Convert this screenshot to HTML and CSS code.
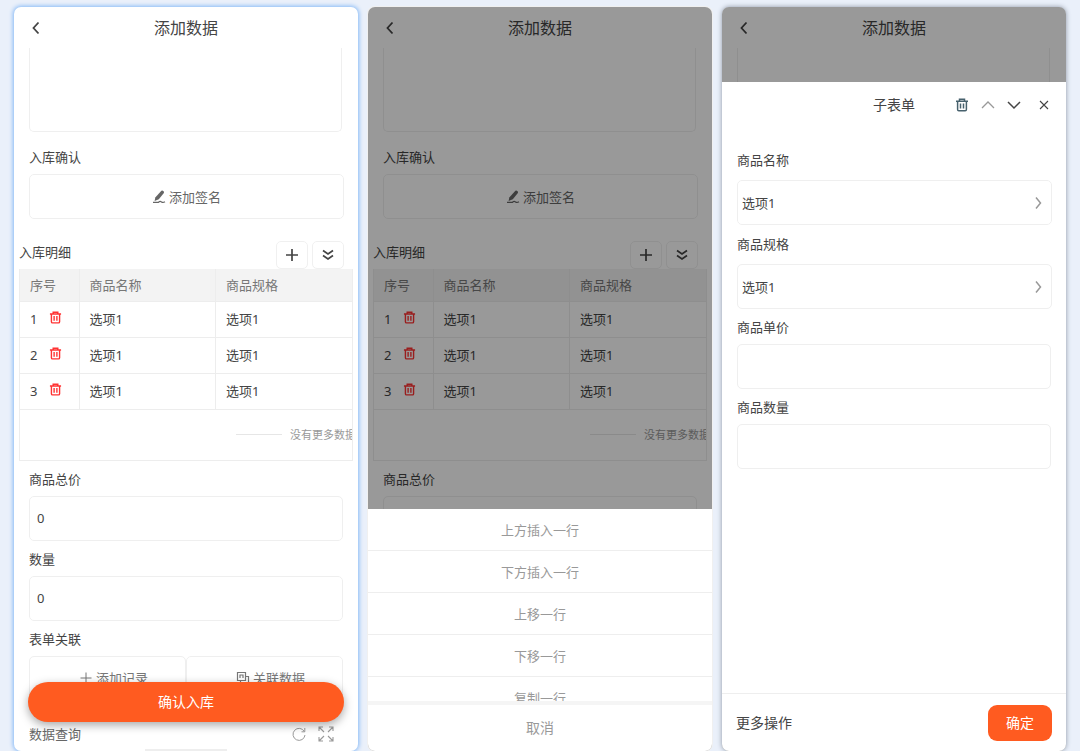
FILE: index.html
```
<!DOCTYPE html>
<html lang="zh-CN">
<head>
<meta charset="utf-8">
<meta name="viewport" content="width=device-width, initial-scale=1">
<title>添加数据</title>
<link rel="stylesheet" href="styles.css">
</head>
<body>
<svg class="sprite" aria-hidden="true">
  <symbol id="back" viewBox="0 0 16 16"><path d="M10.5 2.5 5.5 8l5 5.5" fill="none" stroke="currentColor" stroke-width="1.8"/></symbol>
  <symbol id="pen" viewBox="0 0 14 14"><path d="M9.400.8Q10.400.1 11.400 1t.5 2L6.800 9.200 2.600 10.900 3.300 7.400Z" fill="currentColor"/><path d="M1 12.300h5.500q1.500-1.400 3-.4t3.500-.2" fill="none" stroke="currentColor" stroke-width="1.200"/></symbol>
  <symbol id="plus" viewBox="0 0 14 14"><path d="M7 1v12M1 7h12" fill="none" stroke="currentColor" stroke-width="1.700"/></symbol>
  <symbol id="thin-plus" viewBox="0 0 14 14"><path d="M7 1.500v11M1.500 7h11" fill="none" stroke="currentColor"/></symbol>
  <symbol id="double-down" viewBox="0 0 14 14"><path d="m2 2.500 5 3.500 5-3.500M2 7.500 7 11l5-3.500" fill="none" stroke="currentColor" stroke-width="1.700"/></symbol>
  <symbol id="trash" viewBox="0 0 14 14"><path d="M1 3.200h12M4.500 3V1.300h5V3M2.600 3.500v8q0 1.300 1.200 1.300h6.400q1.200 0 1.200-1.300v-8M5.500 5.500v5M8.500 5.500v5" fill="none" stroke="currentColor" stroke-width="1.500"/></symbol>
  <symbol id="link-data" viewBox="0 0 14 14"><path d="M1.500 1.500h8v8h-8zM4 7V4h3v3M9.500 5.500h3v7M4.500 9.500v2.500H8" fill="none" stroke="currentColor" stroke-width="1.200"/></symbol>
  <symbol id="refresh" viewBox="0 0 14 14"><path d="M12.300 4.500A6 6 0 1 0 13 8M12.800 1v3.800H9.500" fill="none" stroke="currentColor"/></symbol>
  <symbol id="expand" viewBox="0 0 16 16"><path d="M1 5V1h4M1 1l5 5M11 1h4v4M15 1l-5 5M1 11v4h4M1 15l5-5M11 15h4v-4M15 15l-5-5" fill="none" stroke="currentColor" stroke-width="1.100"/></symbol>
  <symbol id="up" viewBox="0 0 14 14"><path d="m1 10 6-6 6 6" fill="none" stroke="currentColor" stroke-width="1.300"/></symbol>
  <symbol id="down" viewBox="0 0 14 14"><path d="m1 4 6 6 6-6" fill="none" stroke="currentColor" stroke-width="1.500"/></symbol>
  <symbol id="close" viewBox="0 0 14 14"><path d="m3 3 8 8M11 3l-8 8" fill="none" stroke="currentColor" stroke-width="1.100"/></symbol>
  <symbol id="right" viewBox="0 0 14 14"><path d="m5 1.500 4.500 5.500L5 12.500" fill="none" stroke="currentColor" stroke-width="1.500"/></symbol>
</svg>

<main class="board">
  <section class="phone phone-active">
    <header class="bar">
      <button class="icon-btn" type="button" aria-label="返回"><svg class="icon-lg"><use href="#back"/></svg></button>
      <h1 class="bar-title">添加数据</h1>
    </header>
    <form class="form">
      <textarea class="note" aria-label="备注"></textarea>
      <h2 class="label label-first">入库确认</h2>
      <button class="sign" type="button"><svg class="icon"><use href="#pen"/></svg>添加签名</button>
      <div class="detail">
        <div class="detail-head">
          <h2 class="detail-title">入库明细</h2>
          <button class="tool" type="button" aria-label="添加"><svg class="icon"><use href="#plus"/></svg></button>
          <button class="tool" type="button" aria-label="展开"><svg class="icon"><use href="#double-down"/></svg></button>
        </div>
        <div class="table-box">
          <table class="table">
            <thead><tr><th class="col-no">序号</th><th>商品名称</th><th>商品规格</th></tr></thead>
            <tbody>
              <tr><td><span class="row-no">1<button class="del" type="button" aria-label="删除"><svg class="icon-sm"><use href="#trash"/></svg></button></span></td><td>选项1</td><td>选项1</td></tr>
              <tr><td><span class="row-no">2<button class="del" type="button" aria-label="删除"><svg class="icon-sm"><use href="#trash"/></svg></button></span></td><td>选项1</td><td>选项1</td></tr>
              <tr><td><span class="row-no">3<button class="del" type="button" aria-label="删除"><svg class="icon-sm"><use href="#trash"/></svg></button></span></td><td>选项1</td><td>选项1</td></tr>
            </tbody>
          </table>
          <p class="no-more">没有更多数据</p>
        </div>
      </div>
      <label class="label" for="total">商品总价</label>
      <input class="field" id="total" type="text" value="0">
      <label class="label" for="count">数量</label>
      <input class="field" id="count" type="text" value="0">
      <h2 class="label">表单关联</h2>
      <div class="pair">
        <button class="relate" type="button"><svg class="icon"><use href="#thin-plus"/></svg>添加记录</button>
        <button class="relate" type="button"><svg class="icon"><use href="#link-data"/></svg>关联数据</button>
      </div>
      <div class="query">
        <h2 class="query-title">数据查询</h2>
        <button class="icon-btn" type="button" aria-label="刷新"><svg class="icon"><use href="#refresh"/></svg></button>
        <button class="icon-btn" type="button" aria-label="全屏"><svg class="icon-lg"><use href="#expand"/></svg></button>
      </div>
      <div class="handle"></div>
    </form>
    <button class="submit" type="button">确认入库</button>
  </section>

  <section class="phone">
    <header class="bar">
      <button class="icon-btn" type="button" aria-label="返回"><svg class="icon-lg"><use href="#back"/></svg></button>
      <h1 class="bar-title">添加数据</h1>
    </header>
    <form class="form">
      <textarea class="note" aria-label="备注"></textarea>
      <h2 class="label label-first">入库确认</h2>
      <button class="sign" type="button"><svg class="icon"><use href="#pen"/></svg>添加签名</button>
      <div class="detail">
        <div class="detail-head">
          <h2 class="detail-title">入库明细</h2>
          <button class="tool" type="button" aria-label="添加"><svg class="icon"><use href="#plus"/></svg></button>
          <button class="tool" type="button" aria-label="展开"><svg class="icon"><use href="#double-down"/></svg></button>
        </div>
        <div class="table-box">
          <table class="table">
            <thead><tr><th class="col-no">序号</th><th>商品名称</th><th>商品规格</th></tr></thead>
            <tbody>
              <tr><td><span class="row-no">1<button class="del" type="button" aria-label="删除"><svg class="icon-sm"><use href="#trash"/></svg></button></span></td><td>选项1</td><td>选项1</td></tr>
              <tr><td><span class="row-no">2<button class="del" type="button" aria-label="删除"><svg class="icon-sm"><use href="#trash"/></svg></button></span></td><td>选项1</td><td>选项1</td></tr>
              <tr><td><span class="row-no">3<button class="del" type="button" aria-label="删除"><svg class="icon-sm"><use href="#trash"/></svg></button></span></td><td>选项1</td><td>选项1</td></tr>
            </tbody>
          </table>
          <p class="no-more">没有更多数据</p>
        </div>
      </div>
      <label class="label" for="total-2">商品总价</label>
      <input class="field" id="total-2" type="text">
    </form>
    <div class="mask">
      <div class="actions">
        <div class="actions-list">
          <button class="action" type="button">上方插入一行</button>
          <button class="action" type="button">下方插入一行</button>
          <button class="action" type="button">上移一行</button>
          <button class="action" type="button">下移一行</button>
          <button class="action" type="button">复制一行</button>
        </div>
        <button class="cancel" type="button">取消</button>
      </div>
    </div>
  </section>

  <section class="phone phone-raised">
    <header class="bar">
      <button class="icon-btn" type="button" aria-label="返回"><svg class="icon-lg"><use href="#back"/></svg></button>
      <h1 class="bar-title">添加数据</h1>
    </header>
    <div class="form"><textarea class="note" aria-label="备注"></textarea></div>
    <div class="mask mask-sub">
      <form class="sub">
        <header class="sub-head">
          <h2 class="sub-title">子表单</h2>
          <div class="sub-tools">
            <button class="icon-btn sub-trash" type="button" aria-label="删除"><svg class="icon"><use href="#trash"/></svg></button>
            <button class="icon-btn sub-up" type="button" aria-label="上一条"><svg class="icon"><use href="#up"/></svg></button>
            <button class="icon-btn" type="button" aria-label="下一条"><svg class="icon"><use href="#down"/></svg></button>
            <button class="icon-btn sub-close" type="button" aria-label="关闭"><svg class="icon"><use href="#close"/></svg></button>
          </div>
        </header>
        <div class="sub-body">
          <label class="label label-select" for="name">商品名称</label>
          <div class="select"><select class="field" id="name"><option>选项1</option></select><svg class="icon select-arrow"><use href="#right"/></svg></div>
          <label class="label label-select" for="spec">商品规格</label>
          <div class="select"><select class="field" id="spec"><option>选项1</option></select><svg class="icon select-arrow"><use href="#right"/></svg></div>
          <label class="label" for="price">商品单价</label>
          <input class="field" id="price" type="text">
          <label class="label" for="qty">商品数量</label>
          <input class="field" id="qty" type="text">
        </div>
        <footer class="sub-foot">
          <button class="more" type="button">更多操作</button>
          <button class="ok" type="button">确定</button>
        </footer>
      </form>
    </div>
  </section>
</main>
</body>
</html>
```
FILE: styles.css
```
* { box-sizing: border-box; }

body {
  margin: 0;
  background: #eaf0fa;
  color: #444;
  font: 13px/20px "Noto Sans", "Noto Sans CJK SC", sans-serif;
}

h1, h2, p { margin: 0; font-weight: 400; }
h2 { font-size: inherit; }

button, input, select, textarea {
  margin: 0;
  padding: 0;
  border: 0;
  background: none;
  color: inherit;
  font: inherit;
}

svg { display: block; flex: none; }
.sprite { position: absolute; width: 0; height: 0; }
.icon { width: 14px; height: 14px; }
.icon-sm { width: 13px; height: 13px; }
.icon-lg { width: 16px; height: 16px; }

.board {
  display: grid;
  grid-template-columns: repeat(3, minmax(0, 1fr));
  gap: 10px;
  height: 100vh;
  padding: 7px 14px 0;
}

.phone {
  position: relative;
  display: flex;
  flex-direction: column;
  min-height: 0;
  overflow: hidden;
  border-radius: 7px;
  background: #fff;
  box-shadow: 0 0 0 1px #f0f0f0;
}
.phone-active { box-shadow: 0 0 4px 1px #84b8f6; }
.phone-raised { box-shadow: 0 0 5px #8c95a3; }

.bar {
  display: grid;
  grid-template-columns: 16px 1fr 16px;
  align-items: center;
  flex: none;
  height: 41px;
  padding: 0 14px;
}
.bar-title { font-size: 16px; line-height: 24px; text-align: center; }

.form {
  display: flex;
  flex-direction: column;
  flex: 1;
  min-height: 0;
  overflow: hidden;
  padding: 0 15px;
}
.form > * { flex: none; }

.note {
  height: 84px;
  margin-right: 1px;
  border: 1px solid #efefef;
  border-top: 0;
  border-radius: 0 0 5px 5px;
  resize: none;
}

.label { display: block; padding: 8px 0 7px; }
.label-first { padding-top: 15px; }

.field {
  width: 100%;
  height: 45px;
  padding: 0 7px;
  border: 1px solid #efefef;
  border-radius: 5px;
}

.sign {
  display: flex;
  align-items: center;
  justify-content: center;
  gap: 3px;
  height: 45px;
  margin-right: -1px;
  border: 1px solid #efefef;
  border-radius: 5px;
  color: #666;
}

.detail { margin: 0 -10px; padding-top: 22px; }
.detail-head { display: flex; align-items: flex-start; gap: 4px; padding-right: 9px; }
.detail-title { flex: 1; line-height: 22px; }
.tool {
  display: grid;
  place-items: center;
  width: 32px;
  height: 28px;
  border: 1px solid #f0f0f0;
  border-radius: 5px;
}

.table-box { overflow: hidden; border: 1px solid #ededed; border-top: 0; }
.table { width: 100%; border-collapse: collapse; table-layout: fixed; }
.table th, .table td {
  height: 36px;
  padding: 0 10px;
  border-bottom: 1px solid #ededed;
  text-align: left;
}
.table th { height: 32px; background: #f3f3f3; color: #777; font-weight: 400; }
.table th + th, .table td + td { border-left: 1px solid #ededed; }
.table .col-no { width: 59px; }
.row-no { display: flex; align-items: center; gap: 12px; }
.del { padding-bottom: 3px; color: #f33; }

.no-more {
  display: flex;
  align-items: center;
  gap: 8px;
  height: 50px;
  padding-left: 216px;
  color: #999;
  font-size: 11px;
  white-space: nowrap;
}
.no-more::before { content: ""; flex: none; width: 46px; height: 1px; background: #e6e6e6; }

.pair { display: grid; grid-template-columns: 1fr 1fr; }
.relate {
  display: flex;
  align-items: center;
  justify-content: center;
  gap: 3px;
  height: 45px;
  padding-left: 12px;
  border: 1px solid #efefef;
  border-radius: 5px;
  color: #777;
}

.query {
  display: flex;
  align-items: center;
  gap: 12px;
  padding: 23px 9px 5px 0;
  color: #999;
}
.query-title { flex: 1; color: #666; }
.handle { width: 82px; height: 4px; margin: 0 auto; background: #eee; }

.submit {
  position: absolute;
  right: 14px;
  bottom: 29px;
  left: 14px;
  height: 40px;
  border-radius: 20px;
  background: #ff5b20;
  box-shadow: 0 3px 10px rgb(0 0 0 / 35%);
  color: #fff;
  font-size: 14px;
}

.mask {
  position: absolute;
  inset: 0;
  display: flex;
  flex-direction: column;
  justify-content: flex-end;
  background: rgb(0 0 0 / 40%);
}
.mask-sub { padding-top: 75px; }

.actions { background: #fff; color: #999; }
.actions-list { height: 192px; overflow: hidden; }
.action { display: block; width: 100%; height: 42px; border-bottom: 1px solid #eee; }
.cancel {
  display: block;
  width: 100%;
  height: 50px;
  border-top: 4px solid #f5f5f5;
  font-size: 14px;
}

.sub { display: flex; flex: 1; flex-direction: column; background: #fff; }
.sub-head {
  display: grid;
  grid-template-columns: 1fr auto 1fr;
  align-items: center;
  height: 46px;
  padding: 0 15px;
}
.sub-title { grid-column: 2; font-size: 14px; }
.sub-tools { display: flex; justify-content: flex-end; gap: 12px; }
.sub-trash { color: #47616d; }
.sub-up { color: #999; }
.sub-close { padding-left: 4px; }
.sub-body { flex: 1; padding: 13px 15px 0; }
.label-select { padding: 9px 0 10px; }
.select { display: grid; align-items: center; margin-right: -1px; }
.select > * { grid-area: 1 / 1; }
.select .field { appearance: none; padding: 0 4px; }
.select-arrow { justify-self: end; margin-right: 7px; color: #999; pointer-events: none; }

.sub-foot {
  display: flex;
  align-items: center;
  justify-content: space-between;
  height: 58px;
  padding: 0 14px;
  border-top: 1px solid #eee;
  font-size: 14px;
}
.ok { width: 64px; height: 36px; border-radius: 9px; background: #ff5b20; color: #fff; }
```
